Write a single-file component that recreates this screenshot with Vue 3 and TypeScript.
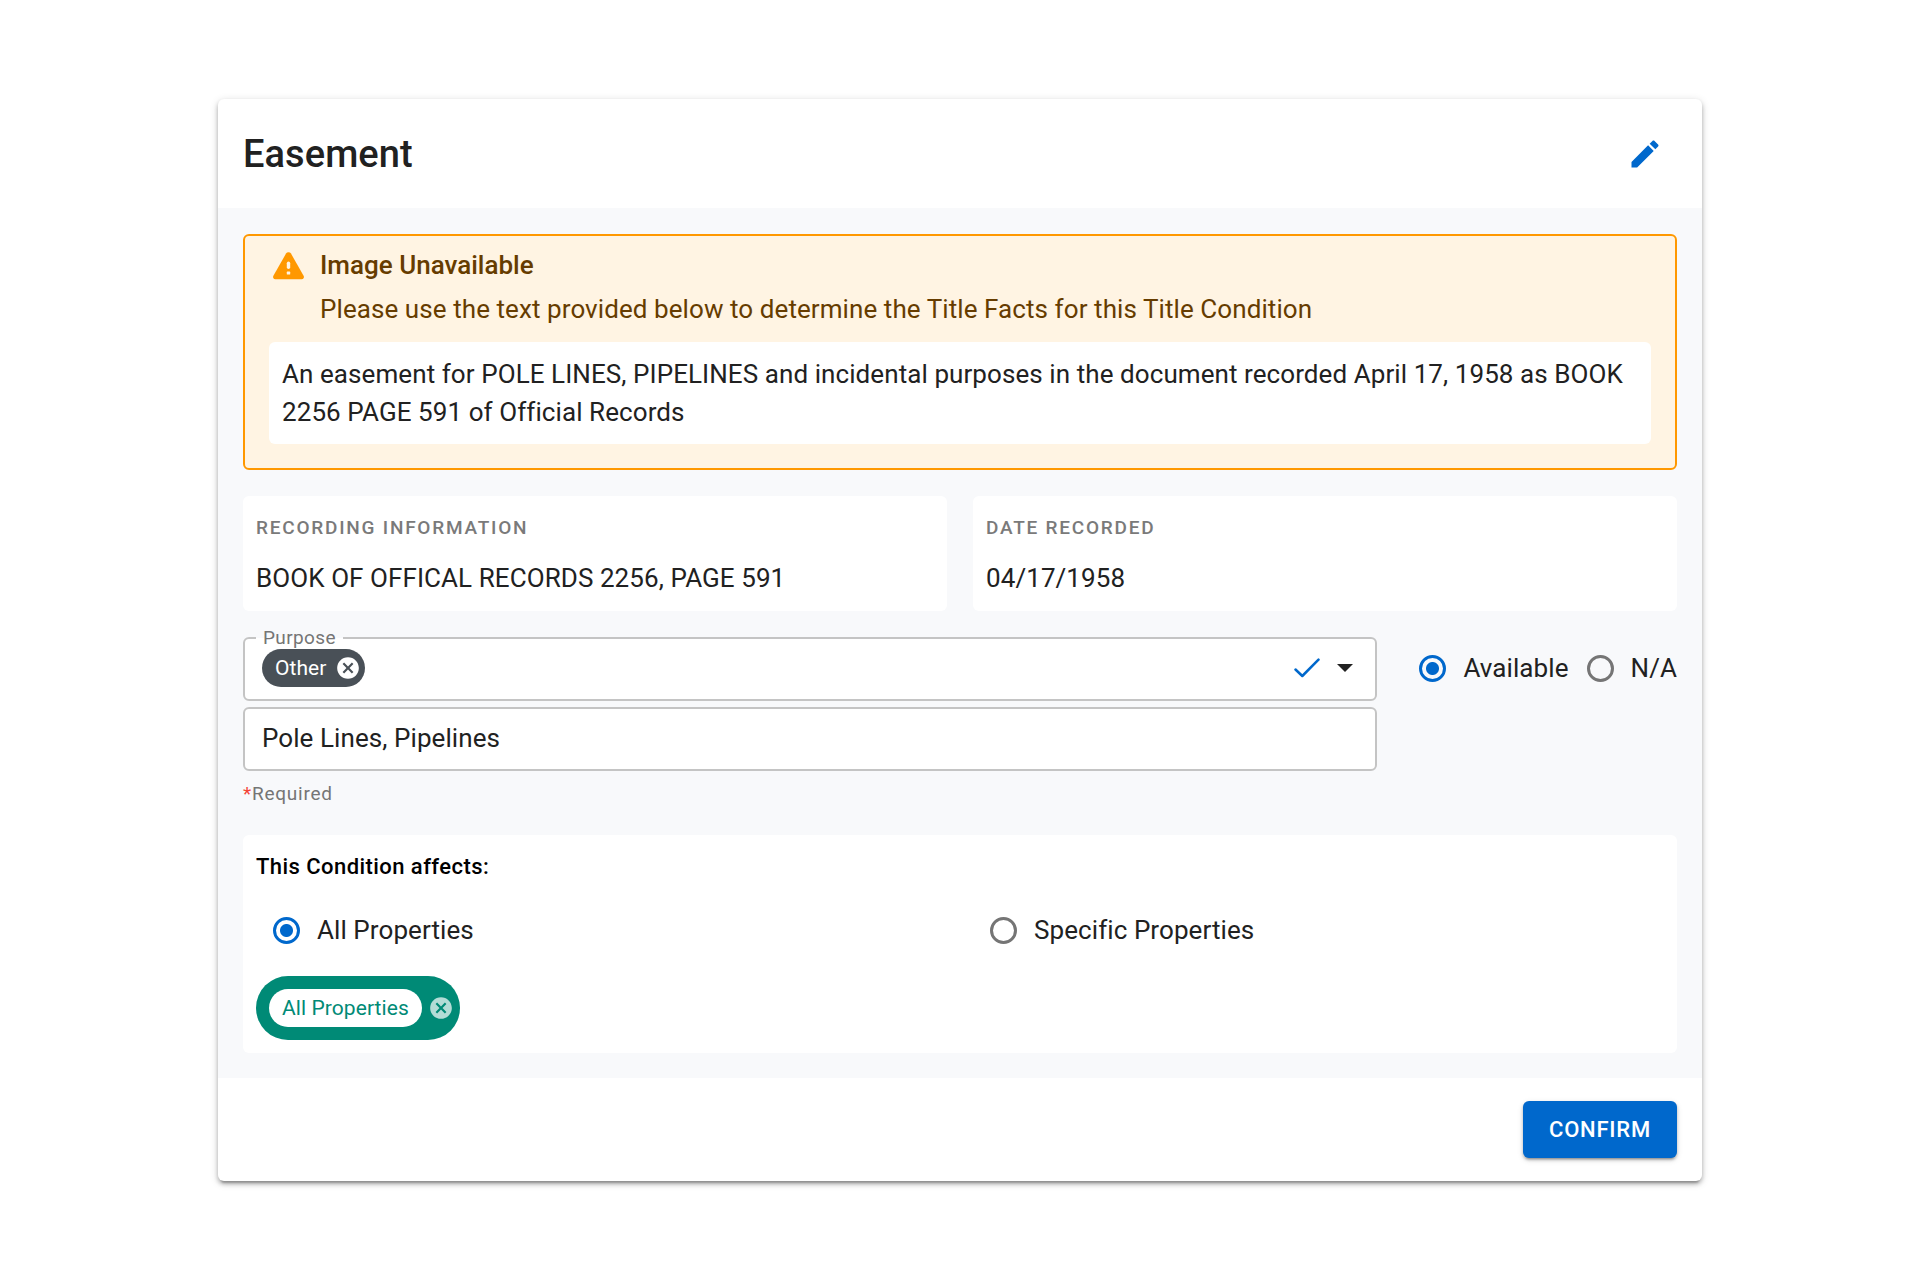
<script setup lang="ts">
import { ref } from 'vue'

interface Fact {
  label: string
  value: string
}

const facts: Fact[] = [
  { label: 'Recording Information', value: 'BOOK OF OFFICAL RECORDS 2256, PAGE 591' },
  { label: 'Date Recorded', value: '04/17/1958' },
]

const availability = ref<'available' | 'na'>('available')
const scope = ref<'all' | 'specific'>('all')
const purposeDetail = ref('Pole Lines, Pipelines')
</script>

<template>
  <main class="page">
    <article class="card">
      <header class="card-header">
        <h1>Easement</h1>
        <button class="icon-button" type="button" aria-label="Edit">
          <svg class="edit-icon" viewBox="0 0 24 24" aria-hidden="true">
            <path d="M3 17.25V21h3.75L17.81 9.94l-3.75-3.75L3 17.25zM20.71 7.04c.39-.39.39-1.02 0-1.41l-2.34-2.34c-.39-.39-1.02-.39-1.41 0l-1.83 1.83 3.75 3.75 1.83-1.83z" />
          </svg>
        </button>
      </header>

      <div class="card-body">
        <section class="alert">
          <div class="alert-head">
            <svg class="warning-icon" viewBox="0 0 31 28" aria-hidden="true">
              <path d="M13 1.6a2.9 2.9 0 0 1 5 0l12.6 22.2c.9 1.6 0 3.5-1.8 3.5H2.2C.4 27.3-.5 25.4.4 23.8z" fill="#ff9800" />
              <rect x="13.8" y="9.5" width="3.4" height="7.5" rx="1.7" fill="#fff4e3" />
              <rect x="13.8" y="19.6" width="3.4" height="3" rx=".6" fill="#fff4e3" />
            </svg>
            <div class="alert-text">
              <h2>Image Unavailable</h2>
              <p>Please use the text provided below to determine the Title Facts for this Title Condition</p>
            </div>
          </div>
          <p class="excerpt">
            An easement for POLE LINES, PIPELINES and incidental purposes in the document recorded April 17, 1958 as BOOK 2256 PAGE 591 of Official Records
          </p>
        </section>

        <dl class="facts">
          <div v-for="fact in facts" :key="fact.label" class="fact">
            <dt>{{ fact.label }}</dt>
            <dd>{{ fact.value }}</dd>
          </div>
        </dl>

        <section class="purpose">
          <div class="purpose-fields">
            <div class="field" role="group" aria-labelledby="purpose-label">
              <span id="purpose-label" class="field-label">Purpose</span>
              <span class="chip">
                Other
                <button class="chip-remove" type="button" aria-label="Remove Other">
                  <svg viewBox="0 0 24 24" aria-hidden="true">
                    <path d="M12 2C6.47 2 2 6.47 2 12s4.47 10 10 10 10-4.47 10-10S17.53 2 12 2zm5 13.59L15.59 17 12 13.41 8.41 17 7 15.59 10.59 12 7 8.41 8.41 7 12 10.59 15.59 7 17 8.41 13.41 12 17 15.59z" />
                  </svg>
                </button>
              </span>
              <span class="field-actions">
                <svg class="check-icon" viewBox="0 0 26 20" aria-hidden="true">
                  <path d="M1.5 11.5l6.8 6.5L24.5 1.7" />
                </svg>
                <button class="drop-button" type="button" aria-label="Open purposes">
                  <svg viewBox="0 0 16 8" aria-hidden="true"><path d="M0 0l8 8 8-8z" /></svg>
                </button>
              </span>
            </div>
            <input v-model="purposeDetail" class="field text-field" type="text" aria-label="Purpose details" />
            <p class="hint"><span>*</span>Required</p>
          </div>
          <div class="availability">
            <label class="radio"><input v-model="availability" type="radio" name="availability" value="available" />Available</label>
            <label class="radio"><input v-model="availability" type="radio" name="availability" value="na" />N/A</label>
          </div>
        </section>

        <section class="affects">
          <h3>This Condition affects:</h3>
          <div class="scope">
            <label class="radio"><input v-model="scope" type="radio" name="scope" value="all" />All Properties</label>
            <label class="radio"><input v-model="scope" type="radio" name="scope" value="specific" />Specific Properties</label>
          </div>
          <div class="property-chip">
            <span>All Properties</span>
            <button class="chip-remove" type="button" aria-label="Remove All Properties">
              <svg viewBox="0 0 24 24" aria-hidden="true">
                <path d="M12 2C6.47 2 2 6.47 2 12s4.47 10 10 10 10-4.47 10-10S17.53 2 12 2zm5 13.59L15.59 17 12 13.41 8.41 17 7 15.59 10.59 12 7 8.41 8.41 7 12 10.59 15.59 7 17 8.41 13.41 12 17 15.59z" />
              </svg>
            </button>
          </div>
        </section>
      </div>

      <footer class="card-footer">
        <button class="confirm" type="button">Confirm</button>
      </footer>
    </article>
  </main>
</template>

<style>
body {
  background: #fff;
}
</style>

<style scoped>
.page {
  padding: 99px 218px;
  color: #212121;
  font: 400 26px/38px Roboto, "Liberation Sans", sans-serif;
  letter-spacing: 0.003em;
}

.page *,
.page {
  box-sizing: border-box;
}

h1,
h2,
h3,
p,
dl,
dd {
  margin: 0;
}

button {
  padding: 0;
  border: 0;
  background: none;
  font-family: inherit;
  cursor: pointer;
}

svg {
  display: block;
}

.card {
  border-radius: 6px;
  background: #fff;
  box-shadow:
    0 5px 2px -3px rgba(0, 0, 0, 0.2),
    0 3px 4px rgba(0, 0, 0, 0.24),
    0 2px 8px rgba(0, 0, 0, 0.16);
}

.card-header {
  display: flex;
  align-items: center;
  justify-content: space-between;
  height: 109px;
  padding: 0 39px 0 25px;
}

h1 {
  font-size: 38px;
  font-weight: 500;
  line-height: 50px;
}

.edit-icon {
  width: 36px;
  height: 36px;
  fill: #0068cc;
}

.card-body {
  display: flex;
  flex-direction: column;
  gap: 26px;
  padding: 26px 25px 25px;
  background: #f8f9fb;
}

.alert {
  padding: 10px 24px 24px;
  border: 2px solid #ff9800;
  border-radius: 6px;
  background: #fff4e3;
  color: #663c00;
}

.alert-head {
  display: flex;
  gap: 16px;
  padding-left: 4px;
}

.warning-icon {
  flex: none;
  width: 31px;
  height: 28px;
  margin-top: 6px;
}

.alert-text {
  display: flex;
  flex-direction: column;
  gap: 6px;
}

h2 {
  font-size: 26px;
  font-weight: 500;
  letter-spacing: 0;
}

.excerpt {
  margin-top: 14px;
  padding: 13px;
  border-radius: 6px;
  background: #fff;
  color: #212121;
}

.facts {
  display: grid;
  grid-template-columns: 1fr 1fr;
  gap: 26px;
}

.fact {
  display: flex;
  flex-direction: column;
  gap: 18px;
  padding: 19px 13px 14px;
  border-radius: 6px;
  background: #fff;
}

dt {
  color: #7a7a7a;
  font-size: 19px;
  font-weight: 500;
  line-height: 26px;
  letter-spacing: 0.093em;
  text-transform: uppercase;
}

.purpose {
  display: flex;
  gap: 42px;
}

.purpose-fields {
  display: flex;
  flex: 1;
  flex-direction: column;
  gap: 6px;
}

.field {
  position: relative;
  display: flex;
  align-items: center;
  justify-content: space-between;
  width: 100%;
  height: 64px;
  padding: 0 17px 2px;
  border: 2px solid #c4c4c4;
  border-radius: 6px;
  background: #fff;
}

.field-label {
  position: absolute;
  top: -13px;
  left: 11px;
  padding: 0 7px;
  background: linear-gradient(#f8f9fb 50%, #fff 50%);
  color: #757575;
  font-size: 19px;
  line-height: 24px;
  letter-spacing: 0.02em;
}

.text-field {
  color: #212121;
  font: inherit;
  letter-spacing: inherit;
}

.chip {
  position: relative;
  display: flex;
  align-items: center;
  gap: 8px;
  height: 38px;
  padding: 0 4px 0 13px;
  border-radius: 19px;
  background: #495057;
  color: #fff;
  font-size: 21px;
}

.chip-remove {
  width: 26px;
  height: 26px;
}

.chip-remove svg {
  width: 26px;
  height: 26px;
  fill: #fff;
}

.field-actions {
  display: flex;
  align-items: center;
  gap: 17px;
  padding-right: 5px;
}

.check-icon {
  width: 26px;
  height: 20px;
  fill: none;
  stroke: #0068cc;
  stroke-width: 2.5;
  stroke-linecap: round;
  stroke-linejoin: round;
}

.drop-button svg {
  width: 16px;
  height: 8px;
  fill: #212121;
}

.hint {
  padding: 3px 0 1px;
  color: #757575;
  font-size: 19px;
  line-height: 28px;
  letter-spacing: 0.04em;
}

.hint span {
  color: #f44336;
}

.availability {
  display: flex;
  gap: 18px;
  height: 64px;
  padding-bottom: 2px;
}

.radio {
  display: flex;
  align-items: center;
  gap: 17px;
}

.radio input {
  width: 27px;
  height: 27px;
  margin: 0;
  border: 3px solid #757575;
  border-radius: 50%;
  appearance: none;
}

.radio input:checked {
  border-color: #0068cc;
  background: radial-gradient(circle, #0068cc 6px, transparent 7px);
}

.affects {
  padding: 13px;
  border-radius: 6px;
  background: #fff;
}

h3 {
  color: #000;
  font-size: 22px;
  font-weight: 500;
  letter-spacing: 0.02em;
}

.scope {
  display: grid;
  grid-template-columns: 1fr 1fr;
  margin: 0 -13px;
  padding: 25px 0 27px;
}

.scope .radio {
  padding-left: 30px;
}

.property-chip {
  display: inline-flex;
  align-items: center;
  gap: 6px;
  height: 64px;
  padding: 0 6px 0 13px;
  border-radius: 32px;
  background: #008a76;
  vertical-align: top;
}

.property-chip span {
  padding: 0 13px;
  border-radius: 19px;
  background: #fff;
  color: #008a76;
  font-size: 21px;
}

.property-chip svg {
  fill: rgba(255, 255, 255, 0.7);
}

.card-footer {
  display: flex;
  justify-content: flex-end;
  padding: 23px 25px;
}

.confirm {
  height: 57px;
  padding: 0 26px;
  border-radius: 6px;
  background: #0068cc;
  box-shadow:
    0 4px 2px -3px rgba(0, 0, 0, 0.2),
    0 2px 3px rgba(0, 0, 0, 0.24),
    0 2px 6px rgba(0, 0, 0, 0.12);
  color: #fff;
  font-size: 22px;
  font-weight: 500;
  line-height: 38px;
  letter-spacing: 0.035em;
  text-transform: uppercase;
}
</style>
